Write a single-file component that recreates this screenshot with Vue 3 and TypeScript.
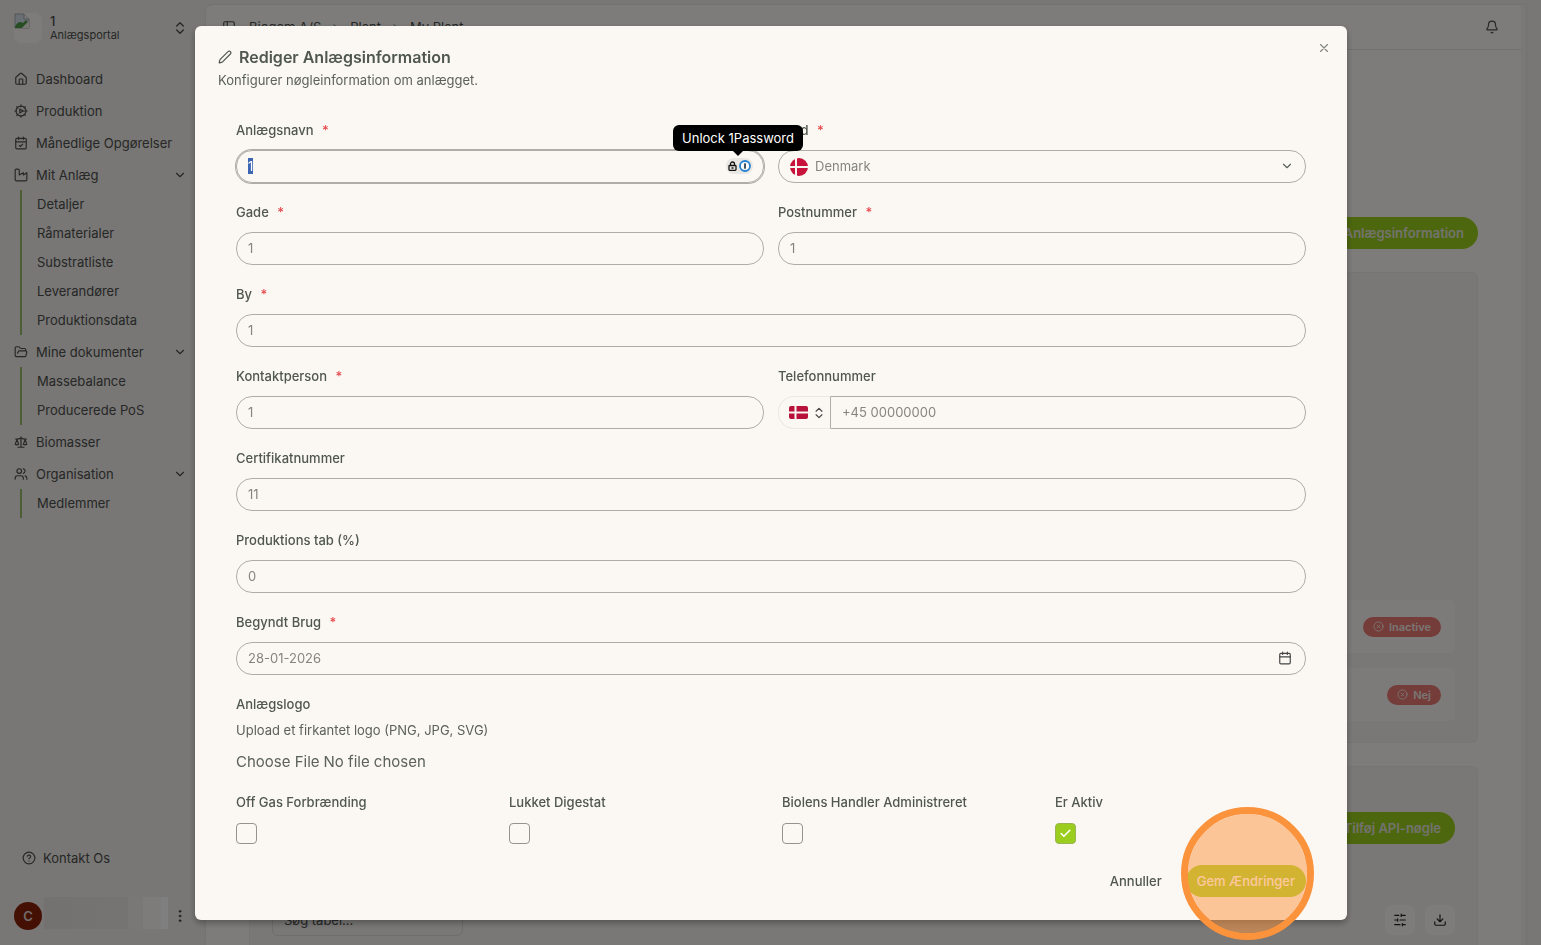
<script setup lang="ts">
import { onMounted, ref } from 'vue'

interface NavItem {
  label: string
  icon: string
  children?: string[]
}

const icons: Record<string, string> = {
  home: '<path d="M15 21v-8a1 1 0 0 0-1-1h-4a1 1 0 0 0-1 1v8"/><path d="M3 10a2 2 0 0 1 .7-1.5l7-6a2 2 0 0 1 2.6 0l7 6A2 2 0 0 1 21 10v9a2 2 0 0 1-2 2H5a2 2 0 0 1-2-2z"/>',
  production: '<circle cx="12" cy="12" r="8.5"/><path d="M10 8.5v7l5.500-3.500z"/><path d="M12 1.500v3M12 19.500v3M1.500 12h3M15 12h7.500M4.600 4.600l2 2M17.400 17.400l2 2M19.400 4.600l-2 2M6.600 17.400l-2 2"/>',
  calendarCheck: '<path d="M8 2v4M16 2v4M3 10h18M9 16l2 2 4-4"/><rect x="3" y="4" width="18" height="18" rx="2"/>',
  factory: '<path d="M4 2a2 2 0 0 0-2 2v16a2 2 0 0 0 2 2h16a2 2 0 0 0 2-2V8l-6 4V8l-7 4V4a2 2 0 0 0-2-2z"/>',
  folder: '<path d="m6 14 1.500-2.900A2 2 0 0 1 9.240 10H20a2 2 0 0 1 1.940 2.500l-1.540 6a2 2 0 0 1-1.950 1.500H4a2 2 0 0 1-2-2V5a2 2 0 0 1 2-2h3.900a2 2 0 0 1 1.690.900l.810 1.200a2 2 0 0 0 1.670.900H18a2 2 0 0 1 2 2v2"/>',
  scale: '<path d="m16 16 3-8 3 8c-.87.65-1.920 1-3 1s-2.130-.35-3-1ZM2 16l3-8 3 8c-.87.65-1.920 1-3 1s-2.130-.35-3-1ZM7 21h10M12 3v18M3 7h2c2 0 5-1 7-2 2 1 5 2 7 2h2"/>',
  users: '<path d="M16 21v-2a4 4 0 0 0-4-4H6a4 4 0 0 0-4 4v2"/><circle cx="9" cy="7" r="4"/><path d="M22 21v-2a4 4 0 0 0-3-3.870M16 3.130a4 4 0 0 1 0 7.750"/>',
}

const navItems: NavItem[] = [
  { label: 'Dashboard', icon: 'home' },
  { label: 'Produktion', icon: 'production' },
  { label: 'Månedlige Opgørelser', icon: 'calendarCheck' },
  {
    label: 'Mit Anlæg',
    icon: 'factory',
    children: ['Detaljer', 'Råmaterialer', 'Substratliste', 'Leverandører', 'Produktionsdata'],
  },
  { label: 'Mine dokumenter', icon: 'folder', children: ['Massebalance', 'Producerede PoS'] },
  { label: 'Biomasser', icon: 'scale' },
  { label: 'Organisation', icon: 'users', children: ['Medlemmer'] },
]

const form = ref({
  name: '1',
  country: 'Denmark',
  street: '1',
  zip: '1',
  city: '1',
  contact: '1',
  phone: '',
  certificate: '11',
  loss: '0',
  start: '28-01-2026',
})

const options = ref([
  { id: 'offgas', label: 'Off Gas Forbrænding', checked: false },
  { id: 'digestate', label: 'Lukket Digestat', checked: false },
  { id: 'managed', label: 'Biolens Handler Administreret', checked: false },
  { id: 'active', label: 'Er Aktiv', checked: true },
])

const nameInput = ref<HTMLInputElement | null>(null)
onMounted(() => {
  nameInput.value?.focus()
  nameInput.value?.select()
})
</script>

<template>
  <div class="app">
    <aside class="sidebar">
      <button class="portal" type="button">
        <span class="portal-logo">
          <svg width="16" height="16" viewBox="0 0 16 16">
            <path d="M1 1h9l5 5v9H1z" fill="#d3dfea" stroke="#a5a8aa" />
            <path d="M10 1v5h5" fill="#f5f5f5" stroke="#a5a8aa" />
            <path d="M1 14c2-5 5-6 8-4l3-3 2 2-6 6H1z" fill="#4e9a45" />
            <path d="M15 8v7H8z" fill="#f0eeea" />
          </svg>
        </span>
        <span class="portal-text"><b>1</b><span>Anlægsportal</span></span>
        <svg class="icon" viewBox="0 0 24 24"><path d="m7 15 5 5 5-5M7 9l5-5 5 5" /></svg>
      </button>

      <nav>
        <ul class="nav">
          <li v-for="item in navItems" :key="item.label">
            <a href="#" class="nav-link">
              <svg class="icon small" viewBox="0 0 24 24" v-html="icons[item.icon]"></svg>
              <span>{{ item.label }}</span>
              <svg v-if="item.children" class="icon chevron" viewBox="0 0 24 24"><path d="m6 9 6 6 6-6" /></svg>
            </a>
            <ul v-if="item.children" class="subnav">
              <li v-for="child in item.children" :key="child"><a href="#">{{ child }}</a></li>
            </ul>
          </li>
        </ul>
      </nav>

      <div class="sidebar-foot">
        <a href="#" class="contact">
          <svg class="icon small" viewBox="0 0 24 24"><circle cx="12" cy="12" r="10" /><path d="M9.090 9a3 3 0 0 1 5.830 1c0 2-3 3-3 3M12 17h.01" /></svg>
          Kontakt Os
        </a>
        <div class="account">
          <span class="avatar">C</span>
          <span class="redacted"></span>
          <button type="button" class="bare" aria-label="Konto">
            <svg class="icon dots" viewBox="0 0 24 24"><circle cx="12" cy="5" r="1.500" /><circle cx="12" cy="12" r="1.500" /><circle cx="12" cy="19" r="1.500" /></svg>
          </button>
        </div>
      </div>
    </aside>

    <main class="panel">
      <header class="topbar">
        <svg class="icon small" viewBox="0 0 24 24"><rect x="3" y="3" width="18" height="18" rx="2" /><path d="M9 3v18" /></svg>
        <nav class="crumbs">
          <a href="#">Biogem A/S</a>
          <svg class="icon tiny" viewBox="0 0 24 24"><path d="m9 18 6-6-6-6" /></svg>
          <a href="#">Plant</a>
          <svg class="icon tiny" viewBox="0 0 24 24"><path d="m9 18 6-6-6-6" /></svg>
          <a href="#">My Plant</a>
        </nav>
        <button type="button" class="bare bell" aria-label="Notifikationer">
          <svg class="icon small" viewBox="0 0 24 24"><path d="M10.270 21a2 2 0 0 0 3.460 0M3.260 15.330A1 1 0 0 0 4 17h16a1 1 0 0 0 .74-1.670C19.410 13.960 18 12.500 18 8A6 6 0 0 0 6 8c0 4.500-1.410 5.960-2.740 7.330" /></svg>
        </button>
      </header>

      <div class="content">
        <div class="actions"><button type="button" class="primary">Rediger Anlægsinformation</button></div>

        <section class="card details">
          <div class="status-row">
            <span class="status"><svg class="icon tiny" viewBox="0 0 24 24"><circle cx="12" cy="12" r="10" /><path d="m15 9-6 6M9 9l6 6" /></svg>Inactive</span>
          </div>
          <div class="status-row">
            <span class="status"><svg class="icon tiny" viewBox="0 0 24 24"><circle cx="12" cy="12" r="10" /><path d="m15 9-6 6M9 9l6 6" /></svg>Nej</span>
          </div>
        </section>

        <section class="card keys">
          <div class="actions"><button type="button" class="primary">Tilføj API-nøgle</button></div>
          <div class="toolbar">
            <input type="text" class="search" placeholder="Søg tabel..." aria-label="Søg tabel" />
            <button type="button" class="square" aria-label="Filtre">
              <svg class="icon small" viewBox="0 0 24 24"><path d="M21 4h-7M10 4H3M21 12h-9M8 12H3M21 20h-5M12 20H3M14 2v4M8 10v4M16 18v4" /></svg>
            </button>
            <button type="button" class="square" aria-label="Download">
              <svg class="icon small" viewBox="0 0 24 24"><path d="M21 15v4a2 2 0 0 1-2 2H5a2 2 0 0 1-2-2v-4M7 10l5 5 5-5M12 15V3" /></svg>
            </button>
          </div>
        </section>
      </div>
    </main>
  </div>

  <div class="overlay">
    <div class="dialog" role="dialog" aria-modal="true" aria-labelledby="dialog-title">
      <button type="button" class="bare close" aria-label="Luk">
        <svg class="icon small" viewBox="0 0 24 24"><path d="M18 6 6 18M6 6l12 12" /></svg>
      </button>
      <h2 id="dialog-title">
        <svg class="icon small" viewBox="0 0 24 24"><path d="M21.200 6.800a1 1 0 0 0-4-4L3.800 16.200a2 2 0 0 0-.5.800L2 21.400a.5.5 0 0 0 .600.600l4.400-1.300a2 2 0 0 0 .800-.5z" /></svg>
        Rediger Anlægsinformation
      </h2>
      <p class="description">Konfigurer nøgleinformation om anlægget.</p>

      <form class="form" @submit.prevent>
        <div class="field">
          <label for="name">Anlægsnavn <i>*</i></label>
          <div class="control">
            <input id="name" ref="nameInput" v-model="form.name" type="text" autocomplete="off" />
            <div class="password-badge">
              <svg width="9" height="10" viewBox="0 0 9 10" fill="none" stroke="#111" stroke-width="1.300"><rect x="1" y="4.500" width="7" height="4.800" rx="0.800" /><path d="M2.500 4.500V3a2 2 0 0 1 4 0v1.500M3.500 7h2" /></svg>
              <svg width="12" height="12" viewBox="0 0 12 12"><circle cx="6" cy="6" r="5" fill="#fff" stroke="#2381cf" stroke-width="1.800" /><rect x="5.200" y="3.200" width="1.600" height="5.600" rx="0.500" fill="#16283c" /></svg>
            </div>
            <div class="tooltip" role="tooltip">Unlock 1Password</div>
          </div>
        </div>

        <div class="field">
          <label for="country">Land <i>*</i></label>
          <div class="control">
            <select id="country" v-model="form.country"><option>Denmark</option></select>
            <svg class="round-flag" width="18" height="18" viewBox="0 0 18 18"><circle cx="9" cy="9" r="9" fill="#c8143c" /><path d="M0 8h5V0h2v8h11v2H7v8H5v-8H0z" fill="#faf7f2" /></svg>
            <svg class="icon small select-chevron" viewBox="0 0 24 24"><path d="m6 9 6 6 6-6" /></svg>
          </div>
        </div>

        <div class="field">
          <label for="street">Gade <i>*</i></label>
          <input id="street" v-model="form.street" type="text" />
        </div>
        <div class="field">
          <label for="zip">Postnummer <i>*</i></label>
          <input id="zip" v-model="form.zip" type="text" />
        </div>
        <div class="field wide">
          <label for="city">By <i>*</i></label>
          <input id="city" v-model="form.city" type="text" />
        </div>
        <div class="field">
          <label for="contact">Kontaktperson <i>*</i></label>
          <input id="contact" v-model="form.contact" type="text" />
        </div>
        <div class="field">
          <label for="phone">Telefonnummer</label>
          <div class="phone">
            <button type="button" class="dial" aria-label="Landekode">
              <svg width="19" height="13" viewBox="0 0 19 13"><rect width="19" height="13" rx="2" fill="#b8123a" /><path d="M0 5.500h5.500V0h2v5.500H19v2H7.500V13h-2V7.500H0z" fill="#faf7f2" /></svg>
              <svg class="icon small" viewBox="0 0 24 24"><path d="m7 15 5 5 5-5M7 9l5-5 5 5" /></svg>
            </button>
            <input id="phone" v-model="form.phone" type="tel" placeholder="+45 00000000" />
          </div>
        </div>
        <div class="field wide">
          <label for="certificate">Certifikatnummer</label>
          <input id="certificate" v-model="form.certificate" type="text" />
        </div>
        <div class="field wide">
          <label for="loss">Produktions tab (%)</label>
          <input id="loss" v-model="form.loss" type="text" />
        </div>
        <div class="field wide">
          <label for="start">Begyndt Brug <i>*</i></label>
          <div class="control">
            <input id="start" v-model="form.start" type="text" />
            <svg class="icon small calendar" viewBox="0 0 24 24"><path d="M8 2v4M16 2v4M3 10h18" /><rect x="3" y="4" width="18" height="18" rx="2" /></svg>
          </div>
        </div>

        <div class="upload wide">
          <label for="logo">Anlægslogo</label>
          <p>Upload et firkantet logo (PNG, JPG, SVG)</p>
          <input id="logo" type="file" accept=".png,.jpg,.svg" />
        </div>

        <div class="options wide">
          <div v-for="option in options" :key="option.id" class="option">
            <label :for="option.id">{{ option.label }}</label>
            <span class="tick">
              <input :id="option.id" v-model="option.checked" type="checkbox" />
              <svg v-if="option.checked" class="icon" viewBox="0 0 24 24"><path d="M20 6 9 17l-5-5" /></svg>
            </span>
          </div>
        </div>

        <div class="buttons wide">
          <button type="button" class="cancel">Annuller</button>
          <div class="save-wrap">
            <button type="submit" class="save">Gem Ændringer</button>
            <span class="highlight"></span>
          </div>
        </div>
      </form>
    </div>
  </div>
</template>

<style>
body {
  margin: 0;
  background: #f0eeeb;
  overflow: hidden;
}
</style>

<style scoped>
* {
  box-sizing: border-box;
}
.app,
.overlay {
  font-family: Inter, "Liberation Sans", sans-serif;
  font-size: 13px;
  line-height: 20px;
}
button,
input,
select {
  font: inherit;
  color: inherit;
}
ul {
  list-style: none;
  margin: 0;
  padding: 0;
}
a {
  color: inherit;
  text-decoration: none;
}
.icon {
  width: 16px;
  height: 16px;
  flex: none;
  fill: none;
  stroke: currentColor;
  stroke-width: 2;
  stroke-linecap: round;
  stroke-linejoin: round;
}
.icon.small {
  width: 14px;
  height: 14px;
}
.icon.tiny {
  width: 11px;
  height: 11px;
}
.bare {
  display: flex;
  padding: 0;
  border: 0;
  background: none;
}

.app {
  display: flex;
  height: 100vh;
  overflow: hidden;
  color: #4c4e4c;
  background: #f0eeeb;
}
.sidebar {
  width: 206px;
  flex: none;
  display: flex;
  flex-direction: column;
  padding: 13px 18px 10px 14px;
}
.portal {
  display: flex;
  align-items: center;
  gap: 8px;
  padding: 0;
  border: 0;
  background: none;
  text-align: left;
}
.portal-logo {
  width: 28px;
  height: 30px;
  border-radius: 7px;
  background: #fbf9f6;
}
.portal-logo svg {
  display: block;
}
.portal-text {
  flex: 1;
  display: flex;
  flex-direction: column;
  font-size: 11px;
  line-height: 14px;
}
.portal-text b {
  font-size: 13px;
  font-weight: 500;
}
.nav {
  display: flex;
  flex-direction: column;
  gap: 2px;
  margin-top: 21px;
}
.nav-link {
  display: flex;
  align-items: center;
  gap: 8px;
  height: 30px;
}
.nav-link span {
  flex: 1;
  white-space: nowrap;
}
.chevron {
  width: 14px;
  margin-right: 1px;
}
.subnav {
  margin-left: 6px;
  border-left: 2px solid #98bd6a;
}
.subnav a {
  display: flex;
  align-items: center;
  height: 29px;
  padding: 0 0 2px 15px;
}
.sidebar-foot {
  margin-top: auto;
}
.contact {
  display: flex;
  align-items: center;
  gap: 7px;
  padding-left: 8px;
  margin-bottom: 29px;
}
.account {
  display: flex;
  align-items: center;
  gap: 2px;
}
.avatar {
  display: grid;
  place-items: center;
  width: 28px;
  height: 28px;
  border-radius: 50%;
  background: #8a2008;
  color: #dfd9d4;
  font-weight: 600;
}
.redacted {
  flex: 1;
  height: 32px;
  margin: 0 2px 6px 0;
  background: linear-gradient(90deg, #e6e4e0, #ebe9e5 68%, #f3f1ed 68% 80%, #fbf9f5 80% 94%, #fff 94%);
}
.dots {
  fill: currentColor;
  stroke-width: 1;
}

.panel {
  flex: 1;
  min-width: 0;
  margin: 5px 15px 0 0;
  border-radius: 6px 0 0 0;
  background: #fbf9f5;
  border-right: 5px solid #f3f1ed;
  box-shadow: 0 0 2px #d9d6d0;
}
.topbar {
  display: flex;
  align-items: center;
  height: 45px;
  padding: 0 22px 0 16px;
  border-bottom: 1px solid #e4e2de;
}
.crumbs {
  display: flex;
  align-items: center;
  gap: 9px;
  margin-left: 13px;
}
.bell {
  margin-left: auto;
}
.content {
  padding: 167px 43px 0;
}
.actions {
  display: flex;
  justify-content: flex-end;
}
.primary {
  height: 32px;
  padding: 0 14px;
  border: 0;
  border-radius: 16px;
  background: #9ace1c;
  color: #e6e6dc;
  font-weight: 600;
}
.card {
  margin-top: 23px;
  padding: 22px 22px 21px;
  border-radius: 6px;
  background: #f2f0ec;
  border: 1px solid #edebe7;
}
.details {
  display: flex;
  flex-direction: column;
  justify-content: flex-end;
  gap: 15px;
  min-height: 471px;
}
.status-row {
  display: flex;
  align-items: center;
  justify-content: flex-end;
  height: 53px;
  padding: 0 14px;
  border-radius: 6px;
  background: #f9f7f3;
}
.status {
  display: flex;
  align-items: center;
  gap: 5px;
  height: 20px;
  padding: 0 10px;
  border-radius: 10px;
  background: #ea7a74;
  color: #f3ece8;
  font-size: 11px;
  font-weight: 600;
}
.keys {
  padding-top: 45px;
  min-height: 260px;
}
.toolbar {
  display: flex;
  align-items: center;
  gap: 10px;
  margin-top: 60px;
}
.search {
  width: 191px;
  height: 32px;
  margin-right: auto;
  padding: 0 11px;
  border: 1px solid #dddad5;
  border-radius: 6px;
  background: transparent;
}
.search::placeholder {
  color: #4c4e4c;
}
.square {
  display: grid;
  place-items: center;
  width: 30px;
  height: 30px;
  padding: 0;
  border: 0;
  border-radius: 6px;
  background: #faf8f4;
  color: #222;
}

.overlay {
  position: fixed;
  inset: 0;
  display: flex;
  align-items: flex-start;
  padding: 26px 194px 0 195px;
  background: rgba(0, 0, 0, 0.5);
  color: #5c625b;
}
.dialog {
  position: relative;
  flex: 1;
  padding: 20px 41px 23px;
  border-radius: 6px;
  background: #fbf8f3;
  box-shadow: 0 3px 6px rgba(0, 0, 0, 0.3);
}
.close {
  position: absolute;
  top: 15px;
  right: 16px;
  color: #85857f;
}
h2 {
  display: flex;
  align-items: center;
  gap: 7px;
  margin: 0 0 0 -18px;
  font-size: 16px;
  line-height: 22px;
  font-weight: 600;
  color: #50574f;
}
.description {
  margin: 2px 0 0 -18px;
}
.form {
  display: grid;
  grid-template-columns: 1fr 1fr;
  column-gap: 14px;
  row-gap: 19px;
  margin-top: 30px;
}
.wide {
  grid-column: 1 / -1;
}
.field {
  display: flex;
  flex-direction: column;
  gap: 9px;
  min-width: 0;
}
label {
  display: block;
  line-height: 21px;
  font-weight: 500;
  color: #50574f;
}
label i {
  margin-left: 5px;
  font-style: normal;
  color: #e5484d;
}
.field input,
.field select {
  display: block;
  width: 100%;
  height: 33px;
  padding: 0 11px 2px;
  border: 1px solid #b0ada8;
  border-radius: 16px;
  background: transparent;
  color: #85857f;
  outline: none;
  appearance: none;
}
.field input:focus {
  box-shadow: 0 0 0 1px #b0ada8;
}
.field input::selection {
  background: #3c66b4;
  color: #fff;
}
.field input::placeholder {
  color: #85857f;
  opacity: 1;
}
.field select {
  padding-left: 36px;
}
.control {
  position: relative;
}
.password-badge {
  position: absolute;
  top: 8px;
  right: 11px;
  display: flex;
  align-items: center;
  gap: 2px;
  height: 16px;
  padding: 0 2px;
  border-radius: 8px;
  background: #e9e7e3;
}
.tooltip {
  position: absolute;
  right: -39px;
  bottom: 32px;
  z-index: 1;
  padding: 3px 9px;
  border-radius: 6px;
  background: #000;
  color: #fff;
  white-space: nowrap;
}
.tooltip::after {
  content: "";
  position: absolute;
  top: 100%;
  left: 50%;
  margin-left: -5px;
  border: 5px solid transparent;
  border-top-color: #000;
}
.round-flag {
  position: absolute;
  left: 12px;
  top: 8px;
}
.select-chevron {
  position: absolute;
  right: 12px;
  top: 9px;
}
.calendar {
  position: absolute;
  right: 14px;
  top: 9px;
  color: #444;
}
.phone {
  display: flex;
}
.dial {
  display: flex;
  align-items: center;
  gap: 4px;
  padding: 0 4px 0 10px;
  border: 1px solid #ebe8e3;
  border-right: 0;
  border-radius: 16px 0 0 16px;
  background: transparent;
  color: #444;
}
.field .phone input {
  flex: 1;
  min-width: 0;
  border-radius: 0 16px 16px 0;
}
.upload p {
  margin: 5px 0 11px;
}
.upload input {
  display: block;
  font-size: 15px;
  line-height: 22px;
}
.upload input::file-selector-button {
  margin: 0 4px 0 0;
  padding: 0;
  border: 0;
  background: none;
  font: inherit;
  color: inherit;
}
.options {
  display: grid;
  grid-template-columns: repeat(4, 1fr);
  column-gap: 22px;
}
.tick {
  position: relative;
  display: block;
  width: 21px;
  height: 21px;
  margin-top: 10px;
}
.tick input {
  display: block;
  width: 21px;
  height: 21px;
  margin: 0;
  border: 1px solid #96948f;
  border-radius: 4px;
  appearance: none;
}
.tick input:checked {
  background: #9acd1e;
  border-color: #9ab353;
}
.tick .icon {
  position: absolute;
  top: 4px;
  left: 4px;
  width: 13px;
  height: 13px;
  color: #fff;
  stroke-width: 3;
}
.buttons {
  display: flex;
  justify-content: flex-end;
  align-items: center;
  gap: 9px;
  margin-top: 2px;
}
.cancel {
  height: 32px;
  padding: 0 15px;
  border: 0;
  background: none;
  font-weight: 500;
  color: #50574f;
}
.save-wrap {
  position: relative;
}
.save {
  height: 32px;
  padding: 0 11px;
  border: 0;
  border-radius: 16px;
  background: #a9d529;
  color: #fff;
  font-weight: 500;
}
.highlight {
  position: absolute;
  top: 50%;
  left: 50%;
  width: 133px;
  height: 133px;
  margin: -74px 0 0 -65px;
  border: 7px solid #fb923c;
  border-radius: 50%;
  background: rgba(251, 146, 60, 0.5);
  background-clip: padding-box;
  pointer-events: none;
}
</style>
